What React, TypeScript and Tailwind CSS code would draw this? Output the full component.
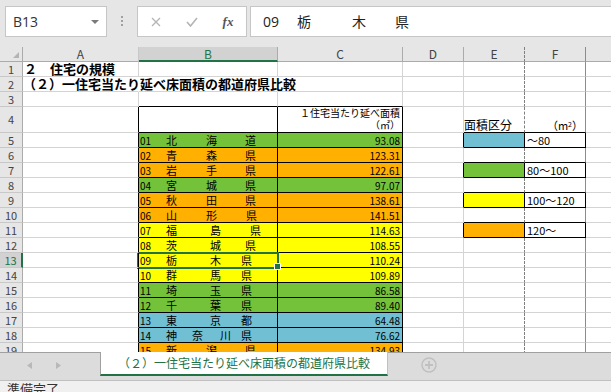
import React from "react";

const GREEN = "bg-[#74c23a]";
const ORANGE = "bg-[#ffb000]";
const YELLOW = "bg-[#ffff00]";
const BLUE = "bg-[#70bfd2]";

type Pref = { code: string; chars: string[]; gaps: string[]; val: string; bg: string };

const prefs: Pref[] = [
  { code: "01", chars: ["北", "海", "道"], gaps: ["ml-[29px]", "ml-[28px]"], val: "93.08", bg: GREEN },
  { code: "02", chars: ["青", "森", "県"], gaps: ["ml-[29px]", "ml-[28px]"], val: "123.31", bg: ORANGE },
  { code: "03", chars: ["岩", "手", "県"], gaps: ["ml-[29px]", "ml-[28px]"], val: "122.61", bg: ORANGE },
  { code: "04", chars: ["宮", "城", "県"], gaps: ["ml-[29px]", "ml-[28px]"], val: "97.07", bg: GREEN },
  { code: "05", chars: ["秋", "田", "県"], gaps: ["ml-[29px]", "ml-[28px]"], val: "138.61", bg: ORANGE },
  { code: "06", chars: ["山", "形", "県"], gaps: ["ml-[29px]", "ml-[29px]"], val: "141.51", bg: ORANGE },
  { code: "07", chars: ["福", "島", "県"], gaps: ["ml-[33px]", "ml-[29px]"], val: "114.63", bg: YELLOW },
  { code: "08", chars: ["茨", "城", "県"], gaps: ["ml-[33px]", "ml-[24px]"], val: "108.55", bg: YELLOW },
  { code: "09", chars: ["栃", "木", "県"], gaps: ["ml-[33px]", "ml-[20px]"], val: "110.24", bg: YELLOW },
  { code: "10", chars: ["群", "馬", "県"], gaps: ["ml-[33px]", "ml-[20px]"], val: "109.89", bg: YELLOW },
  { code: "11", chars: ["埼", "玉", "県"], gaps: ["ml-[33px]", "ml-[20px]"], val: "86.58", bg: GREEN },
  { code: "12", chars: ["千", "葉", "県"], gaps: ["ml-[33px]", "ml-[20px]"], val: "89.40", bg: GREEN },
  { code: "13", chars: ["東", "京", "都"], gaps: ["ml-[33px]", "ml-[20px]"], val: "64.48", bg: BLUE },
  { code: "14", chars: ["神", "奈", "川", "県"], gaps: ["ml-[15px]", "ml-[17px]", "ml-[10px]"], val: "76.62", bg: BLUE },
  { code: "15", chars: ["新", "潟", "県"], gaps: ["ml-[29px]", "ml-[28px]"], val: "134.93", bg: ORANGE },
];

const legend: Record<number, { bg: string; label: string }> = {
  5: { bg: BLUE, label: "～80" },
  7: { bg: GREEN, label: "80～100" },
  9: { bg: YELLOW, label: "100～120" },
  11: { bg: ORANGE, label: "120～" },
};

function SheetRow({ n }: { n: number }) {
  const pref = n >= 5 ? prefs[n - 5] : undefined;
  const leg = legend[n];
  const h = n === 4 ? "h-[26px]" : "h-[15px]";
  const head =
    n === 13
      ? "bg-[#d2d2d2] text-[#217346] border-r-2 border-r-[#217346]"
      : "bg-[#e6e6e6] text-[#444] border-r border-r-[#ababab]";
  const aRight = n >= 4 ? "border-r-black" : n === 2 ? "border-r-transparent" : "border-r-[#d4d4d4]";
  const bRight = n >= 4 ? "border-r-black" : n === 2 ? "border-r-transparent" : "border-r-[#d4d4d4]";
  const tBottom = n >= 3 ? "border-b-black" : "border-b-[#d4d4d4]";
  const dRight = leg ? "border-r-black" : "border-r-[#d4d4d4]";
  const eRight = leg ? "border-r-black" : "border-r-[#808080] [border-right-style:dashed]";
  const fRight = leg ? "border-r-black" : "border-r-[#8c8c8c]";
  const lBottom = n >= 4 && n <= 11 ? "border-b-black" : "border-b-[#d4d4d4]";

  return (
    <div className={`flex ${h}`}>
      <div className={`w-[23px] shrink-0 flex items-center justify-center border-b border-b-[#c8c8c8] text-[11px] ${head}`}>
        {n}
      </div>
      <div
        className={`w-[116px] shrink-0 border-r border-b border-b-[#d4d4d4] ${aRight} relative z-10 flex items-center whitespace-nowrap text-[13px] font-bold`}
      >
        {n === 1 && <span className="pl-[1px]">２　住宅の規模</span>}
        {n === 2 && <span>（２）一住宅当たり延べ床面積の都道府県比較</span>}
      </div>
      <div className={`w-[139px] shrink-0 border-r border-b ${bRight} ${tBottom} ${pref ? pref.bg : ""} flex items-center`}>
        {pref && (
          <>
            <span className="w-[27px] pl-[1px] text-[10px]">{pref.code}</span>
            {pref.chars.map((c, i) => (
              <span key={i} className={`w-[11px] text-[11px] leading-none ${i > 0 ? pref.gaps[i - 1] : ""}`}>
                {c}
              </span>
            ))}
          </>
        )}
      </div>
      <div
        className={`w-[125px] shrink-0 border-r border-b ${n >= 4 ? "border-r-black" : "border-r-[#d4d4d4]"} ${tBottom} ${pref ? pref.bg : ""} flex items-center justify-end pr-[2px]`}
      >
        {pref && <span className="text-[10px]">{pref.val}</span>}
        {n === 4 && (
          <div className="self-end text-right text-[10px] leading-[12px] pb-[1px]">
            <div>１住宅当たり延べ面積</div>
            <div>（㎡）</div>
          </div>
        )}
      </div>
      <div className={`w-[61px] shrink-0 border-r border-b border-b-[#d4d4d4] ${dRight}`} />
      <div className={`w-[61px] shrink-0 border-r border-b ${eRight} ${lBottom} ${leg ? leg.bg : ""} flex items-end`}>
        {n === 4 && <span className="text-[12px] leading-none whitespace-nowrap pb-[1px]">面積区分</span>}
      </div>
      <div className={`w-[61px] shrink-0 border-r border-b ${fRight} ${lBottom} flex items-center`}>
        {leg && <span className="pl-[2px] text-[11px] whitespace-nowrap">{leg.label}</span>}
        {n === 4 && (
          <span className="ml-auto self-end pr-[2px] pb-[1px] text-[11px] leading-none whitespace-nowrap">
            （m<sup className="text-[7px]">2</sup>）
          </span>
        )}
      </div>
      <div className="flex-1 border-b border-b-[#d4d4d4]" />
    </div>
  );
}

function Toolbar() {
  return (
    <div className="h-[47px] bg-[#e6e6e6] flex items-start pt-[6px]">
      <div className="ml-[5px] w-[102px] h-[31px] bg-white border border-[#c6c6c6] flex items-center justify-between pl-[7px] pr-[7px]">
        <span className="text-[14px] text-[#333] font-['Open_Sans',sans-serif]">B13</span>
        <svg width="8" height="4" viewBox="0 0 8 4">
          <path d="M0 0h8L4 4z" fill="#7a7a7a" />
        </svg>
      </div>
      <div className="ml-[14px] mt-[10px] flex flex-col gap-[2px]">
        <div className="w-[2px] h-[2px] bg-[#a0a0a0]" />
        <div className="w-[2px] h-[2px] bg-[#a0a0a0]" />
        <div className="w-[2px] h-[2px] bg-[#a0a0a0]" />
      </div>
      <div className="ml-[14px] w-[110px] h-[31px] bg-white border border-[#c6c6c6] flex items-center">
        <div className="w-[36px] flex justify-center">
          <svg width="10" height="10" viewBox="0 0 10 10">
            <path d="M1 1l8 8M9 1l-8 8" stroke="#b4b4b4" strokeWidth="1.3" />
          </svg>
        </div>
        <div className="w-[36px] flex justify-center">
          <svg width="12" height="10" viewBox="0 0 12 10">
            <path d="M1 5l3.5 4L11 1" stroke="#b4b4b4" strokeWidth="1.6" fill="none" />
          </svg>
        </div>
        <div className="w-[36px] flex justify-center">
          <span className="text-[13px] italic font-bold text-[#555] font-['Liberation_Serif',serif]">fx</span>
        </div>
      </div>
      <div className="ml-[3px] flex-1 h-[31px] bg-white border border-[#c6c6c6] border-r-0 flex items-center pl-[12px] text-[14px] text-[#222]">
        <span className="w-[34px] font-['Open_Sans',sans-serif]">09</span>
        <span className="w-[55px]">栃</span>
        <span className="w-[43px]">木</span>
        <span>県</span>
      </div>
    </div>
  );
}

function ColumnHeader() {
  return (
    <div className="h-[15px] flex bg-[#e6e6e6] text-[12px] text-[#444] leading-none">
      <div className="w-[23px] shrink-0 border-r border-b border-r-[#ababab] border-b-[#ababab] flex items-end justify-end pr-[3px] pb-[3px]">
        <svg width="6" height="6" viewBox="0 0 6 6">
          <path d="M6 0V6H0z" fill="#b4b4b4" />
        </svg>
      </div>
      <div className="w-[116px] shrink-0 border-r border-b border-r-[#c8c8c8] border-b-[#ababab] flex items-center justify-center">A</div>
      <div className="w-[139px] shrink-0 border-r border-b-2 border-r-[#ababab] border-b-[#217346] bg-[#d2d2d2] text-[#217346] flex items-center justify-center">
        B
      </div>
      <div className="w-[125px] shrink-0 border-r border-b border-r-[#ababab] border-b-[#ababab] flex items-center justify-center">C</div>
      <div className="w-[61px] shrink-0 border-r border-b border-r-[#ababab] border-b-[#ababab] flex items-center justify-center">D</div>
      <div className="w-[61px] shrink-0 border-r border-b border-r-[#808080] [border-right-style:dashed] border-b-[#ababab] flex items-center justify-center">
        E
      </div>
      <div className="w-[61px] shrink-0 border-r border-b border-r-[#8c8c8c] border-b-[#ababab] flex items-center justify-center">F</div>
      <div className="flex-1 border-b border-b-[#ababab]" />
    </div>
  );
}

function TabBar() {
  return (
    <div className="h-[28px] flex bg-[#dcdcdc]">
      <div className="w-[100px] shrink-0 border-t border-t-[#a0a0a0] flex items-center pl-[27px] gap-[24px] pb-[2px]">
        <svg width="5" height="7" viewBox="0 0 5 7">
          <path d="M5 0V7L0 3.5z" fill="#b8b8b8" />
        </svg>
        <svg width="5" height="7" viewBox="0 0 5 7">
          <path d="M0 0V7L5 3.5z" fill="#b8b8b8" />
        </svg>
      </div>
      <div className="w-[288px] shrink-0 h-[24px] bg-white border-l border-r border-l-[#a0a0a0] border-r-[#c0c0c0] border-b-2 border-b-[#217346] flex items-center justify-center text-[12px] text-[#217346] whitespace-nowrap">
        （２）一住宅当たり延べ床面積の都道府県比較
      </div>
      <div className="flex-1 border-t border-t-[#a0a0a0] flex items-center pl-[33px] pb-[3px]">
        <svg width="16" height="16" viewBox="0 0 16 16">
          <circle cx="8" cy="8" r="7" fill="none" stroke="#c0c0c0" strokeWidth="1.5" />
          <path d="M8 4v8M4 8h8" stroke="#c0c0c0" strokeWidth="1.8" />
        </svg>
      </div>
    </div>
  );
}

export default function App() {
  const rows = Array.from({ length: 19 }, (_, i) => i + 1);
  return (
    <div className="relative w-[611px] h-[392px] overflow-hidden bg-white text-black font-['Noto_Sans_CJK_JP',sans-serif]">
      <Toolbar />
      <ColumnHeader />
      <div className="h-[290px] overflow-hidden">
        {rows.map((n) => (
          <SheetRow key={n} n={n} />
        ))}
      </div>
      <TabBar />
      <div className="h-[12px] border-t border-t-[#c0c0c0] bg-[#f0f0f0] overflow-hidden pl-[7px] pt-[1px] text-[13px] leading-none text-[#333]">
        準備完了
      </div>

      {/* active cell B13 */}
      <div className="absolute left-[137px] top-[252px] w-[142px] h-[17px] border-2 border-[#217346]" />
      <div className="absolute left-[274px] top-[263px] w-[7px] h-[7px] bg-[#217346] border border-white" />
    </div>
  );
}
